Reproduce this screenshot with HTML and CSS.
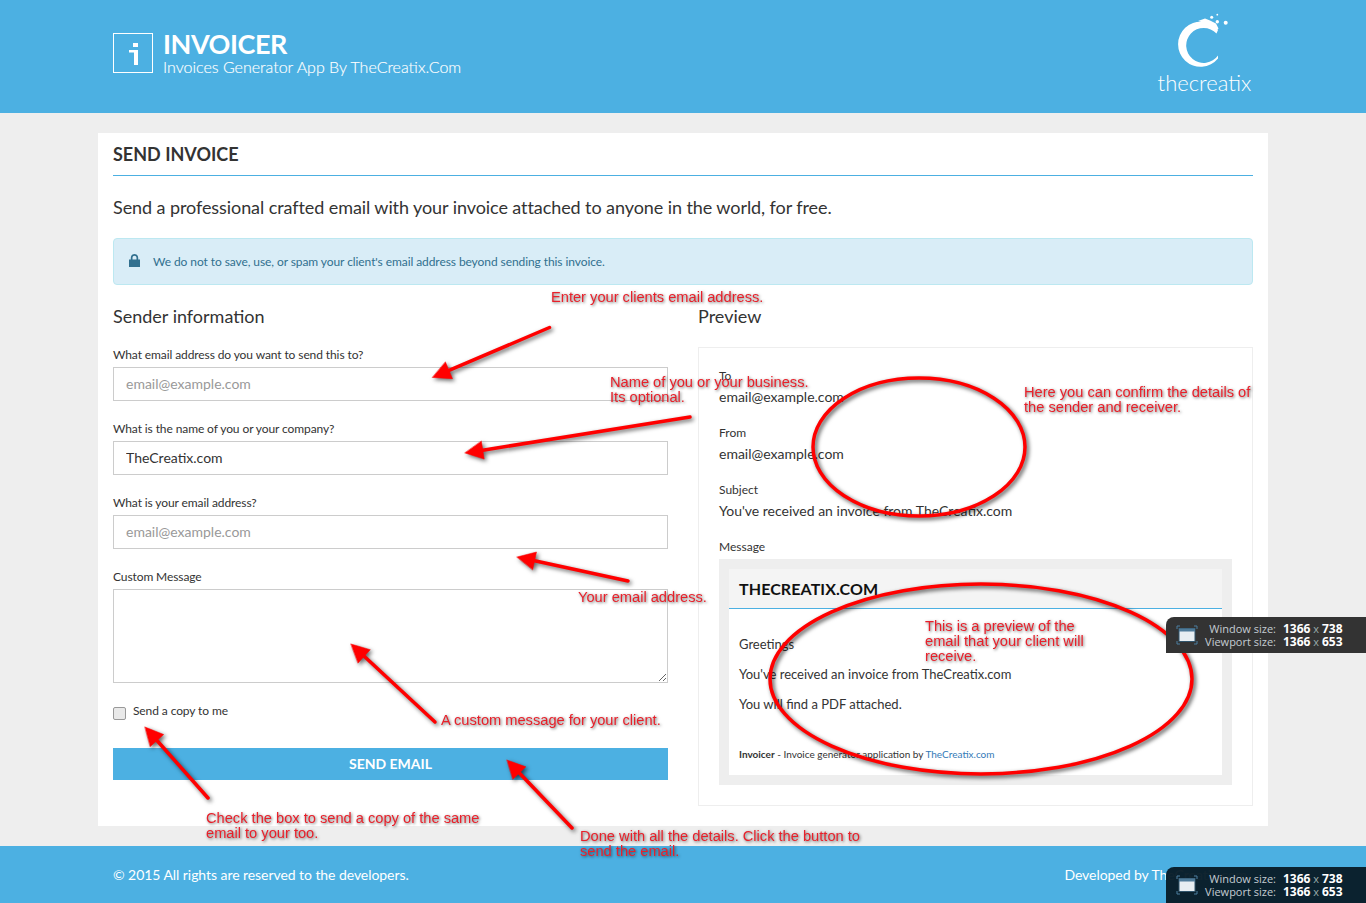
FILE: index.html
```html
<!DOCTYPE html>
<html lang="en">
<head>
<meta charset="utf-8">
<title>Invoicer</title>
<link rel="stylesheet" href="styles.css">
</head>
<body>
<header class="site-header">
  <div class="brand">
    <div class="brand-box">
      <svg class="brand-i" width="9" height="22" viewBox="0 0 9 22"><path fill="#fff" d="M4 0h5v4H4zM0 7h9v15H5V9.500H0z"/></svg>
    </div>
    <div class="brand-text">
      <h1>INVOICER</h1>
      <p>Invoices Generator App By TheCreatix.Com</p>
    </div>
  </div>
  <div class="creatix">
    <svg width="60" height="56" viewBox="1175 13 60 56">
      <path fill="#fff" d="M1218 30A22.500 22.500 0 1 0 1218 58.500L1218 55.500A17.500 17.500 0 1 1 1216.500 33.500Z"/>
      <path fill="#fff" d="M1198 21l7-2.500 5 2 6 3 2.500 5-2 2-5-5-7-2.500z"/>
      <circle cx="1225.700" cy="22.700" r="2" fill="#fff"/><circle cx="1217.300" cy="21.700" r="1.700" fill="#fff"/><circle cx="1217.300" cy="14.700" r=".9" fill="#fff"/><circle cx="1211.700" cy="17.300" r="1.500" fill="#fff"/>
    </svg>
    <span class="creatix-name">thecreatix</span>
  </div>
</header>

<main class="card">
  <h2 class="card-title">SEND INVOICE</h2>
  <p class="lead">Send a professional crafted email with your invoice attached to anyone in the world, for free.</p>
  <div class="alert">
    <svg class="lock" width="11" height="13" viewBox="0 0 11 13"><path fill="#31708f" d="M0 5.500h1.800V3.700C1.800 1.600 3.400 0 5.500 0s3.700 1.600 3.700 3.700v1.800H11V13H0zM3.500 5.500h4V3.700c0-1.100-.9-2-2-2s-2 .9-2 2z"/></svg>
    <span>We do not to save, use, or spam your client's email address beyond sending this invoice.</span>
  </div>
  <div class="columns">
    <form class="sender">
      <h3>Sender information</h3>
      <label class="field"><span>What email address do you want to send this to?</span><input type="text" placeholder="email@example.com"></label>
      <label class="field"><span>What is the name of you or your company?</span><input type="text" value="TheCreatix.com"></label>
      <label class="field"><span>What is your email address?</span><input type="text" placeholder="email@example.com"></label>
      <label class="field"><span>Custom Message</span><textarea></textarea></label>
      <label class="copy"><input type="checkbox"><span>Send a copy to me</span></label>
      <button type="button" class="send">SEND EMAIL</button>
    </form>
    <section class="preview">
      <h3>Preview</h3>
      <div class="preview-box">
        <h4 class="first">To</h4><p>email@example.com</p>
        <h4>From</h4><p>email@example.com</p>
        <h4>Subject</h4><p>You've received an invoice from TheCreatix.com</p>
        <h4>Message</h4>
        <div class="mail">
          <div class="mail-inner">
            <div class="mail-head">THECREATIX.COM</div>
            <div class="mail-body">
              <p>Greetings</p>
              <p>You've received an invoice from TheCreatix.com</p>
              <p>You will find a PDF attached.</p>
            </div>
            <div class="mail-foot"><b>Invoicer</b> - Invoice generator application by <a href="#">TheCreatix.com</a></div>
          </div>
        </div>
      </div>
    </section>
  </div>
</main>

<footer class="site-footer">
  <span>© 2015 All rights are reserved to the developers.</span>
  <span class="dev">Developed by TheCreatix.com</span>
</footer>

<div class="notes">
  <svg class="marks" width="1366" height="903" viewBox="0 0 1366 903">
    <g class="arrows">
      <line x1="549.500" y1="327.500" x2="449" y2="370.400"/><polygon points="432.500,377.500 452.500,378.700 445.500,362.100"/>
      <line x1="690" y1="417" x2="482.800" y2="450.200"/><polygon points="465,453 484.200,459.100 481.400,441.300"/>
      <line x1="628" y1="581" x2="534.600" y2="560.800"/><polygon points="517,557 536.500,552 532.700,569.600"/>
      <line x1="435" y1="722" x2="364.200" y2="656.300"/><polygon points="351,644 370.300,649.700 358.100,662.900"/>
      <line x1="208" y1="798" x2="157" y2="740.500"/><polygon points="145,727 163.700,734.500 150.300,746.500"/>
      <line x1="572" y1="828" x2="519.400" y2="773"/><polygon points="507,760 525.900,766.800 512.900,779.200"/>
    </g>
    <g class="rings">
      <ellipse cx="919" cy="447" rx="106" ry="69"/>
      <ellipse cx="981" cy="679" rx="211" ry="95"/>
    </g>
  </svg>
  <div class="note n1">Enter your clients email address.</div>
  <div class="note n2">Name of you or your business.<br>Its optional.</div>
  <div class="note n3">Here you can confirm the details of<br>the sender and receiver.</div>
  <div class="note n4">Your email address.</div>
  <div class="note n5">This is a preview of the<br>email that your client will<br>receive.</div>
  <div class="note n6">A custom message for your client.</div>
  <div class="note n7">Check the box to send a copy of the same<br>email to your too.</div>
  <div class="note n8">Done with all the details. Click the button to<br>send the email.</div>

  <div class="size-tip tip-mid">
    <svg width="22" height="20" viewBox="0 0 22 20"><path fill="none" stroke="#4d7ea0" d="M1 4V1h3M18 1h3v3M1 16v3h3M18 19h3v-3"/><rect x="3" y="3.500" width="16" height="13" fill="#e8eef2" stroke="#31546b"/><rect x="3" y="3.500" width="16" height="3" fill="#4f7b99"/></svg>
    <dl><dt>Window size:</dt><dd><b>1366</b> x <b>738</b></dd><dt>Viewport size:</dt><dd><b>1366</b> x <b>653</b></dd></dl>
  </div>
  <div class="size-tip tip-low">
    <svg width="22" height="20" viewBox="0 0 22 20"><path fill="none" stroke="#4d7ea0" d="M1 4V1h3M18 1h3v3M1 16v3h3M18 19h3v-3"/><rect x="3" y="3.500" width="16" height="13" fill="#e8eef2" stroke="#31546b"/><rect x="3" y="3.500" width="16" height="3" fill="#4f7b99"/></svg>
    <dl><dt>Window size:</dt><dd><b>1366</b> x <b>738</b></dd><dt>Viewport size:</dt><dd><b>1366</b> x <b>653</b></dd></dl>
  </div>
</div>
</body>
</html>
```
FILE: styles.css
```css
* { box-sizing: border-box; }
html, body { margin: 0; padding: 0; height: 903px; overflow: hidden; }
body { position: relative; background: #eeeeee; color: #333; font-family: Lato, "Liberation Sans", sans-serif; font-size: 14px; }
h1, h2, h3, h4, p { margin: 0; font-weight: 400; }

.site-header { height: 113px; background: #4cb0e2; color: #fff; padding: 13px 115px 0 113px; display: flex; justify-content: space-between; }
.brand { display: flex; gap: 10px; padding-top: 20px; align-items: flex-start; }
.brand-box { width: 40px; height: 40px; border: 1px solid #fff; display: flex; align-items: center; justify-content: center; padding-top: 2px; }
.brand-text h1 { font-size: 27px; line-height: 24px; margin-top: -1px; font-weight: 700; letter-spacing: -.45px; }
.brand-text p { font-size: 16px; line-height: 22px; font-weight: 300; -webkit-text-stroke: .15px #fff; }
.creatix { display: flex; flex-direction: column; align-items: center; width: 93px; }
.creatix svg { display: block; margin-left: 0; }
.creatix-name { font-size: 22px; font-weight: 300; line-height: 24px; margin-top: 2px; white-space: nowrap; }

.card { width: 1170px; height: 693px; margin: 20px auto 0; background: #fff; padding: 0 15px; }
.card-title { height: 43px; padding-top: 9px; font-size: 18px; line-height: 24px; font-weight: 700; color: #333; border-bottom: 1px solid #4cb0e2; }
.lead { font-size: 18px; line-height: 24px; margin-top: 19px; letter-spacing: -.08px; }
.alert { height: 47px; margin-top: 19px; background: #d9edf7; border: 1px solid #bce8f1; border-radius: 4px; color: #31708f; font-size: 12px; letter-spacing: -.08px; padding: 0 15px; display: flex; align-items: center; gap: 13px; }
.lock { margin-top: -2px; }

.columns { display: grid; grid-template-columns: 555px 555px; column-gap: 30px; margin-top: 19px; }
.columns h3 { font-size: 18px; line-height: 24px; }
.sender h3 { margin-bottom: 18px; }
.field { display: block; margin-bottom: 19px; }
.field span { display: block; font-size: 12px; letter-spacing: -.1px; line-height: 18px; margin-bottom: 3px; }
.field input, .field textarea { display: block; width: 100%; border: 1px solid #ccc; background: #fff; color: #333; font: 14px Lato, "Liberation Sans", sans-serif; outline: 0; }
.field input { height: 34px; padding: 0 12px 2px; }
.field input::placeholder { color: #999; opacity: 1; }
.field textarea { height: 94px; padding: 6px 12px; resize: vertical; }
.copy { display: flex; align-items: flex-start; gap: 7px; font-size: 12px; letter-spacing: -.1px; line-height: 18px; height: 46px; }
.copy input { appearance: none; width: 13px; height: 13px; margin: 5px 0 0; border: 1px solid #999; border-radius: 2px; background: #e9e9e9; }
.send { display: block; width: 100%; height: 32px; border: 0; background: #4cb0e2; color: #fff; font: 700 14px Lato, "Liberation Sans", sans-serif; padding: 0 0 2px; }

.preview-box { margin-top: 19px; height: 459px; border: 1px solid #eee; padding: 19px 20px 20px; }
.preview-box h4 { font-size: 12px; line-height: 18px; font-weight: 400; margin-top: 17px; }
.preview-box h4.first { margin-top: 0; }
.preview-box > p { line-height: 20px; margin-top: 2px; }
.mail { margin-top: 3px; height: 226px; background: #eee; padding: 10px; }
.mail-inner { background: #fff; height: 206px; }
.mail-head { height: 40px; background: #f4f4f4; border-bottom: 1px solid #4cb0e2; padding: 10px 10px 0; font-size: 16px; line-height: 20px; color: #111; font-weight: 700; letter-spacing: .1px; }
.mail-body { padding: 25px 10px 0; }
.mail-body p { font-size: 13px; line-height: 20px; margin-bottom: 10px; }
.mail-foot { padding: 23px 10px 0; font-size: 10px; line-height: 14px; }
.mail-foot a { color: #337ab7; text-decoration: none; }

.site-footer { height: 57px; margin-top: 20px; background: #4cb0e2; color: #fff; padding: 0 113px; display: flex; justify-content: space-between; align-items: center; letter-spacing: -.06px; }
.dev { margin-right: 6px; }

.notes { position: absolute; left: 0; top: 0; width: 1366px; height: 903px; pointer-events: none; }
.marks { position: absolute; left: 0; top: 0; }
.arrows { fill: #f00; stroke: #f00; stroke-width: 3.500; stroke-linecap: round; filter: drop-shadow(2px 2px 2px rgba(0,0,0,.6)); }
.arrows polygon { stroke-width: .5; }
.rings { fill: none; stroke: #f00; stroke-width: 3.500; filter: drop-shadow(2px 2px 2px rgba(0,0,0,.7)); }
.note { position: absolute; white-space: nowrap; font: 14.65px/15px "Liberation Sans", Arial, sans-serif; color: #e8202a; text-shadow: 1px 1px 3px rgba(0,0,0,.6); filter: blur(.3px); }
.n1 { left: 551px; top: 290px; }
.n2 { left: 610px; top: 375px; }
.n3 { left: 1024px; top: 385px; }
.n4 { left: 578px; top: 590px; }
.n5 { left: 925px; top: 619px; }
.n6 { left: 441px; top: 713px; }
.n7 { left: 206px; top: 811px; }
.n8 { left: 580px; top: 829px; }

.size-tip { position: absolute; left: 1166px; width: 200px; height: 36px; border-radius: 8px 0 0 0; color: #fff; display: flex; align-items: center; padding-left: 10px; font: 11px/13px "Open Sans", "Liberation Sans", sans-serif; }
.tip-mid { top: 617px; background: #333; }
.tip-low { top: 867px; background: rgba(8, 28, 40, .96); }
.size-tip dl { margin: 0 0 0 7px; display: grid; grid-template-columns: 71px 68px; column-gap: 7px; }
.size-tip dt { text-align: right; color: #c4ccd2; white-space: nowrap; }
.size-tip dd { margin: 0; color: #9aa; white-space: nowrap; }
.size-tip b { color: #fff; font-weight: 700; font-size: 12px; }
```
